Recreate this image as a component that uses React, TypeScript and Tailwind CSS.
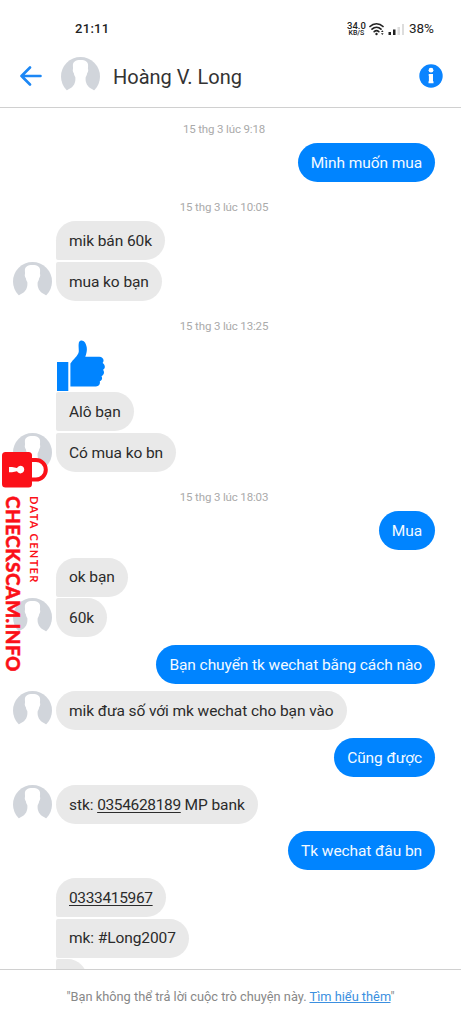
import type { ReactNode } from 'react';

interface Message {
  id: number;
  side: 'in' | 'out';
  text?: ReactNode;
  like?: boolean;
  avatar?: boolean;
  joinTop?: boolean;
  joinBottom?: boolean;
}

interface Section {
  date: string;
  messages: Message[];
}

const phone = (value: string) => (
  <span className="tracking-[-0.35px] underline decoration-1 underline-offset-2">{value}</span>
);

const sections: Section[] = [
  {
    date: '15 thg 3 lúc 9:18',
    messages: [{ id: 1, side: 'out', text: 'Mình muốn mua' }],
  },
  {
    date: '15 thg 3 lúc 10:05',
    messages: [
      { id: 2, side: 'in', text: 'mik bán 60k', joinBottom: true },
      { id: 3, side: 'in', text: 'mua ko bạn', avatar: true, joinTop: true },
    ],
  },
  {
    date: '15 thg 3 lúc 13:25',
    messages: [
      { id: 4, side: 'in', like: true, joinBottom: true },
      { id: 5, side: 'in', text: 'Alô bạn', joinTop: true, joinBottom: true },
      { id: 6, side: 'in', text: 'Có mua ko bn', avatar: true, joinTop: true },
    ],
  },
  {
    date: '15 thg 3 lúc 18:03',
    messages: [
      { id: 7, side: 'out', text: 'Mua' },
      { id: 8, side: 'in', text: 'ok bạn', joinBottom: true },
      { id: 9, side: 'in', text: '60k', avatar: true, joinTop: true },
      { id: 10, side: 'out', text: 'Bạn chuyển tk wechat bằng cách nào' },
      { id: 11, side: 'in', text: 'mik đưa số với mk wechat cho bạn vào', avatar: true },
      { id: 12, side: 'out', text: 'Cũng được' },
      { id: 13, side: 'in', text: <>stk: {phone('0354628189')} MP bank</>, avatar: true },
      { id: 14, side: 'out', text: 'Tk wechat đâu bn' },
      { id: 15, side: 'in', text: phone('0333415967'), joinBottom: true },
      { id: 16, side: 'in', text: 'mk: #Long2007', joinTop: true, joinBottom: true },
      { id: 17, side: 'in', text: '', joinTop: true, joinBottom: true },
    ],
  },
];

function Avatar() {
  return (
    <svg viewBox="0 0 39 39" className="size-[39px] shrink-0" aria-hidden="true">
      <circle cx="19.5" cy="19.5" r="19.5" fill="#d1d5db" />
      <path
        d="M19.500 3C14.500 3 11.600 4.800 11.900 9c.1 1.500.2 2.100.1 3-.5.8-.2 3.500.8 4.100.2 1.900.8 3 1.500 4 .2 2 .2 4-.6 5.900-1.200 4-4.900 5.700-9.200 8L3 35v4h33v-4l-1.500-1c-4.300-2.300-8-4-9.200-8-.8-1.900-.8-3.900-.6-5.900.7-1 1.300-2.100 1.500-4 1-.6 1.300-3.300.8-4.100-.1-.9 0-1.500.1-3C27.400 4.800 24.500 3 19.500 3z"
        fill="#fff"
      />
    </svg>
  );
}

function Like() {
  return (
    <svg viewBox="0 0 48 51" className="ml-px h-[51px] w-12" fill="#0084ff" aria-hidden="true">
      <path d="M0 22h11.300v29H0zM13.400 23.500c3-4.500 7.500-7.500 8.300-11.500.4-2.500-.7-6 .3-10C23-.2 26.400-.2 28 2.500c2.500 4.500 2.400 8.500.3 14.300h14c3.700 0 5.500 3.600 3.300 6.200 2.800 1.800 3 5.100.4 6.800 1.800 2.300 1.100 5.200-1.500 6.400 1.300 2.200.4 4.400-1.700 5 .6 3-.6 5.300-3.800 5.300H13.400z" />
    </svg>
  );
}

function Bubble({ message }: { message: Message }) {
  if (message.side === 'out') {
    return (
      <div className="flex h-[39px] items-center rounded-full bg-[#0084ff] px-[13px] pt-[2px] text-[#f4faff]">
        <span>{message.text}</span>
      </div>
    );
  }

  return (
    <div
      className={`flex h-[39px] min-w-[31px] items-center rounded-r-[20px] bg-[#e9e9e9] px-[13px] pt-[2px] text-[#2b2b2b] ${
        message.joinTop ? 'rounded-tl-[2px]' : 'rounded-tl-[20px]'
      } ${message.joinBottom ? 'rounded-bl-[2px]' : 'rounded-bl-[20px]'}`}
    >
      <span>{message.text}</span>
    </div>
  );
}

function MessageRow({ message, first }: { message: Message; first: boolean }) {
  const gap = first ? '' : message.joinTop ? 'mt-[1.4px]' : 'mt-[7.7px]';

  if (message.side === 'out') {
    return (
      <div className={`flex justify-end pr-[26px] ${gap}`}>
        <Bubble message={message} />
      </div>
    );
  }

  return (
    <div className={`flex pl-[13px] ${gap}`}>
      <div className="mr-[4px] w-[39px] shrink-0">{message.avatar && <Avatar />}</div>
      {message.like ? <Like /> : <Bubble message={message} />}
    </div>
  );
}

function StatusBar() {
  return (
    <div className="flex h-[46px] items-center pt-[11px] pr-[27px] pl-[75px] text-[#222]">
      <span className="text-[13px] font-medium tracking-[0.3px]">21:11</span>
      <div className="ml-auto flex items-center">
        <div className="flex w-[19px] flex-col items-center font-medium">
          <span className="text-[9.5px] leading-[8px]">34.0</span>
          <span className="text-[7px] leading-[6px]">KB/S</span>
        </div>
        <svg viewBox="0 0 36 14" className="ml-[3px] h-[14px] w-9" aria-hidden="true">
          <g fill="none" stroke="#222" strokeWidth="1.7" strokeLinecap="round">
            <path d="M1 4.500c3.600-3.700 9.400-3.700 13 0" />
            <path d="M3 7.200c2.600-2.400 6.400-2.400 9 0" />
            <path d="M5.200 9.700c1.400-1.200 3.200-1.200 4.600 0" />
          </g>
          <circle cx="7.500" cy="12" r="1.200" fill="#222" />
          <path d="M12 10l1.300-1.700 1.300 1.700zM12 11.200h2.600l-1.300 1.700z" fill="#222" />
          <path d="M19.500 10H22v3h-2.500zM24 7.500h2.500V13H24z" fill="#222" />
          <path d="M28.500 5H31v8h-2.500zM33 2h2v11h-2z" fill="#ddd" />
        </svg>
        <span className="ml-[4px] text-[13.5px]">38%</span>
      </div>
    </div>
  );
}

function Header() {
  return (
    <div className="flex h-[61px] items-center pr-[18px] pl-5">
      <svg viewBox="0 0 22 20" className="mb-px h-5 w-[22px]" aria-hidden="true">
        <path
          d="M10 1.500 1.500 10l8.500 8.500M1.500 10h19"
          fill="none"
          stroke="#1c87f5"
          strokeWidth="2.6"
          strokeLinecap="round"
          strokeLinejoin="round"
        />
      </svg>
      <div className="ml-[19px]">
        <Avatar />
      </div>
      <h1 className="ml-[13px] text-[20px] text-[#333]">Hoàng V. Long</h1>
      <svg viewBox="0 0 24 24" className="mb-px ml-auto size-6" aria-hidden="true">
        <circle cx="12" cy="12" r="11.700" fill="#0a84ff" />
        <circle cx="12" cy="6.200" r="2.400" fill="#fff" />
        <path d="M9.700 10h4.300v7.300h.5v2H9.500v-2h.4v-5.300h-.2z" fill="#fff" />
      </svg>
    </div>
  );
}

// Stamp that floats over the left edge of the conversation
function Watermark() {
  return (
    <div className="absolute top-[452px] left-[2px] text-[#fb1018]">
      <svg viewBox="0 0 47 36" className="h-9 w-[47px]" aria-hidden="true">
        <path
          d="M29 8h5a9.800 9.800 0 0 1 0 19.600H29"
          fill="none"
          stroke="currentColor"
          strokeWidth="4"
        />
        <rect x="0" y="0" width="30" height="35.500" rx="3.500" fill="currentColor" />
        <path d="M7 15l3 0 5 1a3.800 3.800 0 1 1 0 3.200l-5 1H7z" fill="#fff" />
      </svg>
      <div className="flex flex-row-reverse items-start justify-end gap-[4px] pt-2 pl-[2px] font-[Lato]">
        <span className="text-[11px] leading-[14px] font-bold tracking-[1.35px] [writing-mode:vertical-rl]">
          DATA CENTER
        </span>
        <span className="text-[19px] leading-[19px] font-black tracking-[0.5px] [-webkit-text-stroke:0.5px] [writing-mode:vertical-rl]">
          CHECKSCAM.INFO
        </span>
      </div>
    </div>
  );
}

export default function App() {
  return (
    <div className="relative flex h-[1024px] w-[461px] flex-col overflow-hidden bg-white font-[Roboto,sans-serif] whitespace-nowrap">
      <StatusBar />
      <Header />
      <main className="min-h-0 flex-1 overflow-hidden border-t border-[#d0d0d0] text-[15.5px] tracking-[-0.08px]">
        <div className="-mt-1">
          {sections.map((section) => (
            <section key={section.date}>
              <p className="pt-[15.8px] pr-[13px] pb-[5.4px] text-center text-[11.5px] leading-[18px] tracking-[-0.15px] text-[#aaa]">
                {section.date}
              </p>
              {section.messages.map((message, index) => (
                <MessageRow key={message.id} message={message} first={index === 0} />
              ))}
            </section>
          ))}
        </div>
      </main>
      <footer className="flex h-[55px] items-center justify-center border-t border-[#d0d0d0] text-[12.8px] text-[#888]">
        <p>
          "Bạn không thể trả lời cuộc trò chuyện này.{' '}
          <a href="#" className="text-[#3b8fe0] underline">
            Tìm hiểu thêm
          </a>
          "
        </p>
      </footer>
      <Watermark />
    </div>
  );
}
